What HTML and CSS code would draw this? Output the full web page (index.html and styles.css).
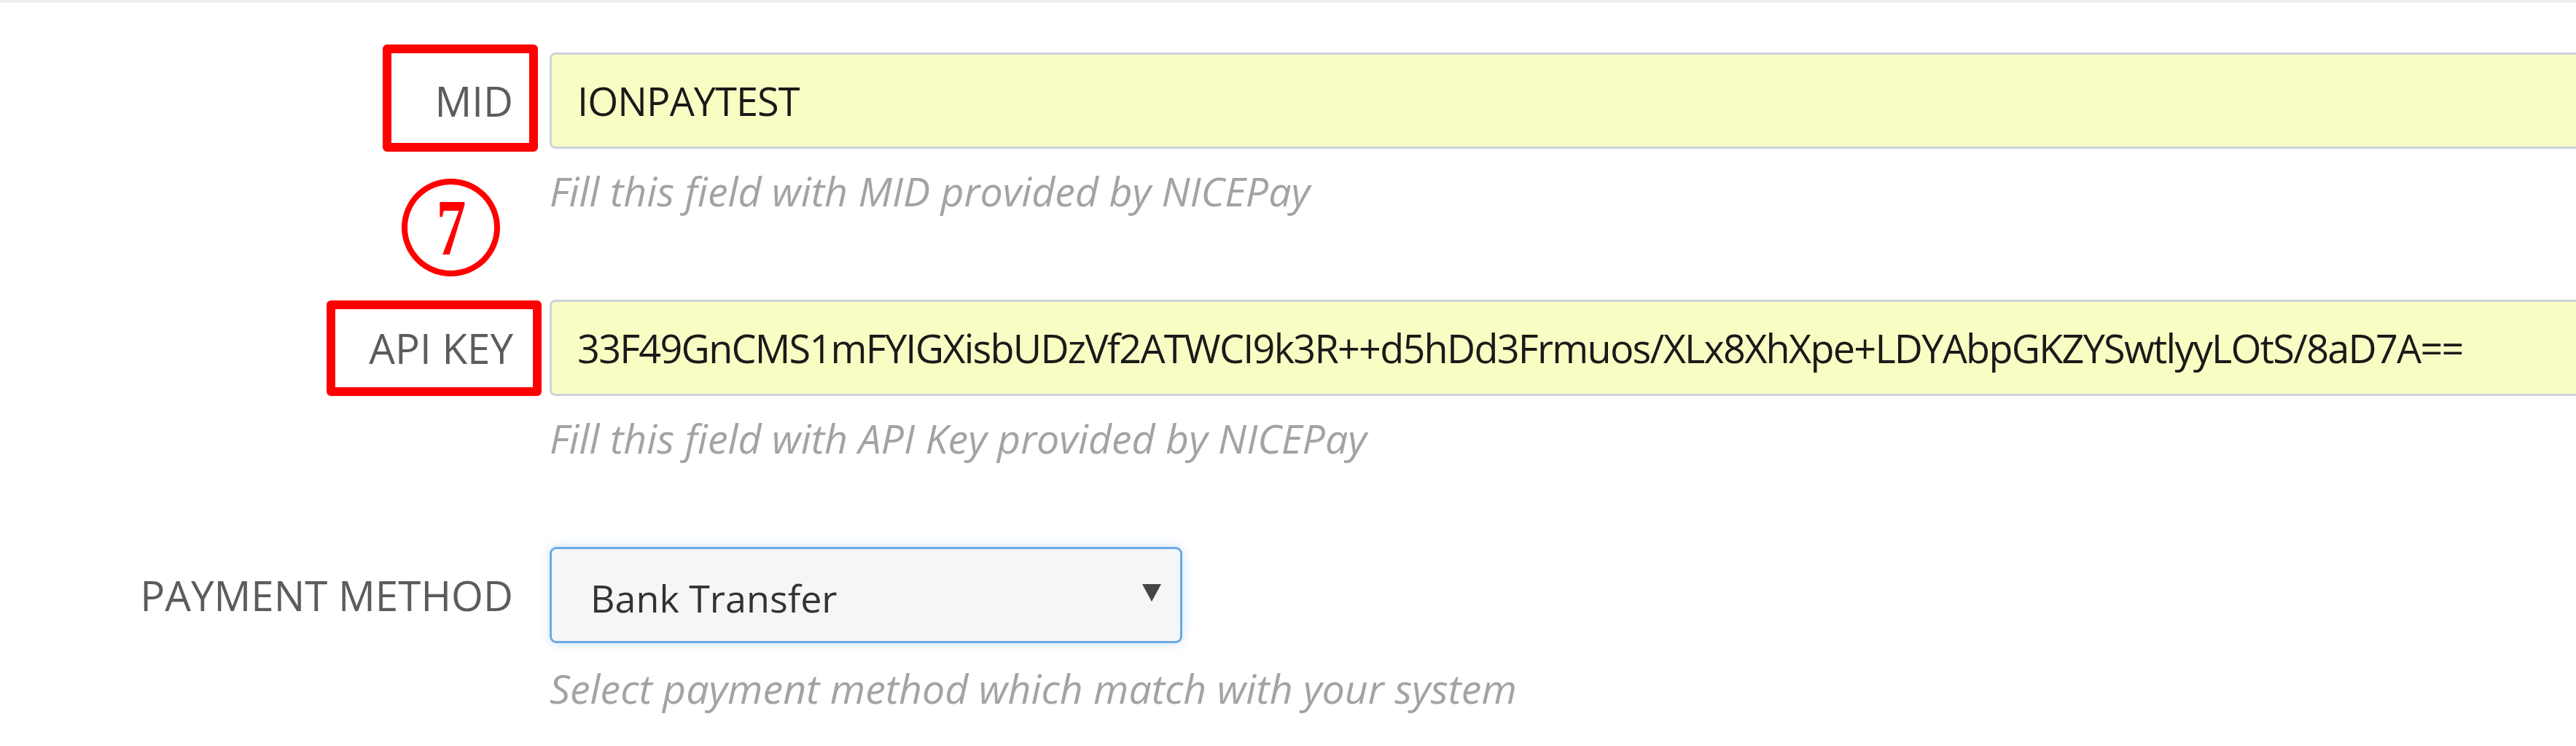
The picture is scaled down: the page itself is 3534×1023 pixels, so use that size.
FILE: index.html
```html
<!DOCTYPE html>
<html lang="en">
<head>
<meta charset="utf-8">
<title>NICEPay settings</title>
<link rel="stylesheet" href="styles.css">
</head>
<body>
<div class="topbar"></div>
<form class="settings">
  <div class="row">
    <div class="lbl">
      <span class="mark mark-mid"></span>
      <span class="step"><span class="step-num">7</span></span>
      MID
    </div>
    <div class="ctl">
      <div class="field field-mid">IONPAYTEST</div>
      <p class="help">Fill this field with MID provided by NICEPay</p>
    </div>
  </div>
  <div class="row">
    <div class="lbl">
      <span class="mark mark-key"></span>
      API KEY
    </div>
    <div class="ctl">
      <div class="field field-key">33F49GnCMS1mFYIGXisbUDzVf2ATWCI9k3R++d5hDd3Frmuos/XLx8XhXpe+LDYAbpGKZYSwtlyyLOtS/8aD7A==</div>
      <p class="help">Fill this field with API Key provided by NICEPay</p>
    </div>
  </div>
  <div class="row">
    <div class="lbl">PAYMENT METHOD</div>
    <div class="ctl">
      <div class="select">
        <span class="select-value">Bank Transfer</span>
        <svg class="caret" width="26" height="25" viewBox="0 0 26 25"><polygon points="0,1 26,1 13,25" fill="#454545"/></svg>
      </div>
      <p class="help help-sel">Select payment method which match with your system</p>
    </div>
  </div>
</form>
</body>
</html>
```

FILE: styles.css
```css
html, body {
  margin: 0;
  padding: 0;
  background: #ffffff;
  overflow: hidden;
}
body {
  font-family: "Open Sans", "Liberation Sans", sans-serif;
  font-size: 54px;
  color: #333;
}
.topbar {
  height: 4px;
  background: #eeeeee;
}
.settings {
  padding-top: 68px;
  display: flex;
  flex-direction: column;
  gap: 111px;
  width: calc(100% + 40px);
}
.row {
  display: grid;
  grid-template-columns: 704px 1fr;
  column-gap: 50px;
  align-items: start;
}
.lbl {
  position: relative;
  height: 132px;
  display: flex;
  align-items: center;
  justify-content: flex-end;
  color: #5c5c5c;
  font-size: 56.5px;
  white-space: nowrap;
}
.field {
  box-sizing: border-box;
  height: 132px;
  background: #fafdc3;
  border: 3px solid #cbd3dc;
  border-radius: 8px;
  padding-left: 35px;
  display: flex;
  align-items: center;
  color: #1a1a1a;
  white-space: nowrap;
  overflow: hidden;
}
.field-mid {
  letter-spacing: -0.9px;
}
.field-key {
  letter-spacing: -1.75px;
}
.help {
  margin: 20px 0 0 0;
  line-height: 76px;
  font-size: 55.5px;
  font-style: italic;
  color: #a3a3a3;
  white-space: nowrap;
}
.help-sel {
  margin-top: 24px;
}
.select {
  box-sizing: border-box;
  width: 868px;
  height: 132px;
  background: #f5f6f8;
  border: 3px solid #6aaae6;
  border-radius: 9px;
  box-shadow: 0 0 14px rgba(102, 170, 233, 0.35);
  display: flex;
  align-items: center;
  justify-content: space-between;
  padding: 0 26px 0 53px;
  color: #333;
}
.select-value {
  font-size: 52px;
  padding-top: 6px;
}
.caret {
  display: block;
  margin-top: -8px;
}
.mark {
  position: absolute;
  box-sizing: border-box;
  border: 12px solid #ff0000;
  border-radius: 6px;
}
.mark-mid {
  left: 525px;
  top: -11px;
  width: 213px;
  height: 147px;
}
.mark-key {
  left: 448px;
  top: 1px;
  width: 295px;
  height: 131px;
}
.step {
  position: absolute;
  left: 551px;
  top: 173px;
  width: 135px;
  height: 134px;
  box-sizing: border-box;
  border: 8px solid #ff0000;
  border-radius: 50%;
  display: flex;
  align-items: center;
  justify-content: center;
  font-family: "Liberation Serif", "DejaVu Serif", serif;
  font-weight: bold;
  font-size: 104px;
  line-height: 1;
  color: #ff0000;
}
.step-num {
  display: inline-block;
  transform: scale(0.78, 1.05);
}
```
